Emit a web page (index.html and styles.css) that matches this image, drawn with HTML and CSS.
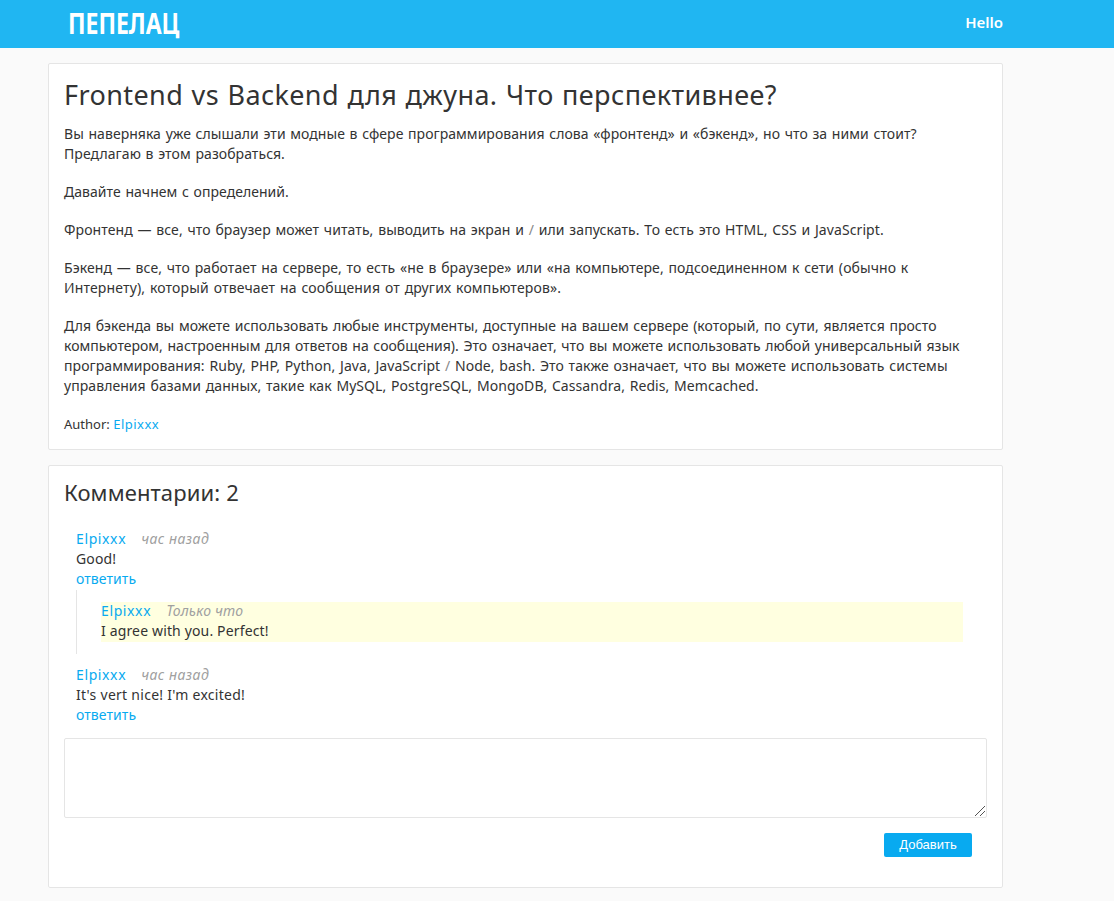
FILE: index.html
```
<!DOCTYPE html>
<html lang="ru">
<head>
<meta charset="utf-8">
<title>Пепелац</title>
<link rel="stylesheet" href="styles.css">
</head>
<body>
<header class="header"><a class="logo">ПЕПЕЛАЦ</a><a class="hello">Hello</a></header>
<main class="page">
<article class="card post">
<h1 class="title">Frontend vs Backend для джуна. Что перспективнее?</h1>
<p><span class="t1">Вы наверняка уже слышали эти модные в сфере программирования слова «фронтенд» и «бэкенд», но что за ними стоит?</span><br><span class="t2">Предлагаю в этом разобраться.</span></p>
<p><span class="t1">Давайте начнем с определений.</span></p>
<p><span class="t3">Фронтенд — все, что браузер может читать, выводить на экран и <span class="slash">/</span> или запускать. То есть это HTML, CSS и JavaScript.</span></p>
<p><span class="t3">Бэкенд — все, что работает на сервере, то есть «не в браузере» или «на компьютере, подсоединенном к сети (обычно к</span><br><span class="t4">Интернету), который отвечает на сообщения от других компьютеров».</span></p>
<p><span class="t1">Для бэкенда вы можете использовать любые инструменты, доступные на вашем сервере (который, по сути, является просто</span><br><span class="t0">компьютером, настроенным для ответов на сообщения). Это означает, что вы можете использовать любой универсальный язык</span><br><span class="t2">программирования: Ruby, PHP, Python, Java, JavaScript <span class="slash">/</span> Node, bash. Это также означает, что вы можете использовать системы</span><br><span class="t2">управления базами данных, такие как MySQL, PostgreSQL, MongoDB, Cassandra, Redis, Memcached.</span></p>
<p class="author">Author: <a class="user">Elpixxx</a></p>
</article>
<section class="card comments">
<h2 class="subtitle">Комментарии: 2</h2>
<div class="comment">
<div class="meta"><a class="user">Elpixxx</a><time class="ago">час назад</time></div>
<div class="text">Good!</div>
<a class="answer">ответить</a>
</div>
<div class="thread"><div class="reply">
<div class="meta"><a class="user">Elpixxx</a><time class="now">Только что</time></div>
<div class="text">I agree with you. Perfect!</div>
</div></div>
<div class="comment">
<div class="meta"><a class="user">Elpixxx</a><time class="ago">час назад</time></div>
<div class="text wide">It's vert nice! I'm excited!</div>
<a class="answer">ответить</a>
</div>
<div class="editor">
<textarea class="field"></textarea>
<svg class="grip" width="12" height="12" viewBox="0 0 12 12"><path d="M1 11L11 1M6 11L11 6" fill="none" stroke="#555" stroke-width="1"/></svg>
</div>
<div class="actions"><button class="submit">Добавить</button></div>
</section>
</main>
</body>
</html>
```
FILE: styles.css
```
* { box-sizing: border-box; }
body { margin: 0; background: #fafafa; color: #333; font: 14px/20px "Noto Sans", sans-serif; }
a { color: #08aaf0; text-decoration: none; }
.header { height: 48px; background: #20b6f2; display: flex; justify-content: space-between; padding: 0 111px 0 68px; line-height: 46px; }
.header a { color: #fff; font-weight: bold; }
.header .logo { font-size: 29px; transform: scaleX(.793); transform-origin: left; }
.header .hello { font-size: 15px; font-weight: 600; line-height: 44px; }
.page { width: 955px; margin: 15px 0 0 48px; white-space: nowrap; }
.card { background: #fff; border: 1px solid #e5e5e5; border-radius: 2px; padding: 15px; }
.post { height: 387px; }
.title { font-size: 27px; font-weight: 400; line-height: 32px; letter-spacing: .41px; word-spacing: 1px; margin: 0 0 13px; }
p { margin: 0 0 18px; word-spacing: 1px; }
.t0 { letter-spacing: .005px; }
.t1 { letter-spacing: .039px; }
.t2 { letter-spacing: .066px; }
.t3 { letter-spacing: .088px; }
.t4 { letter-spacing: .15px; }
.slash { color: #888; }
.author { font-size: 13px; word-spacing: 0; }
.author .user { letter-spacing: .49px; }
.comments { height: 423px; margin-top: 15px; }
.subtitle { font-size: 22px; font-weight: 400; line-height: 22px; letter-spacing: .12px; margin: 0 0 26px; }
.comment { padding: 0 12px; }
.meta { display: flex; gap: 15px; }
.meta .user { letter-spacing: .62px; }
.text { letter-spacing: .15px; }
.wide { letter-spacing: .27px; }
.answer { display: block; width: max-content; letter-spacing: .08px; }
time { color: #a0a0a0; font-style: italic; }
.ago { letter-spacing: .48px; }
.now { letter-spacing: .18px; }
.thread { margin: 1px 0 11px 12px; border-left: 1px solid #e5e5e5; padding: 12px 24px; height: 64px; }
.thread + .comment { margin-bottom: 13px; }
.reply { display: flow-root; height: 40px; background: #ffffe0; }
.reply .meta { margin-top: -1px; }
.editor { position: relative; width: 923px; }
.field { display: block; width: 100%; height: 80px; border: 1px solid #e5e5e5; border-radius: 2px; resize: none; }
.grip { position: absolute; right: 1px; bottom: 1px; }
.actions { display: flex; justify-content: flex-end; padding: 15px 15px 0 0; }
.submit { width: 88px; height: 24px; padding: 0 0 2px; border: 0; border-radius: 2px; background: #08aaf0; color: #fff; font: 13px "Liberation Sans", sans-serif; }
```
